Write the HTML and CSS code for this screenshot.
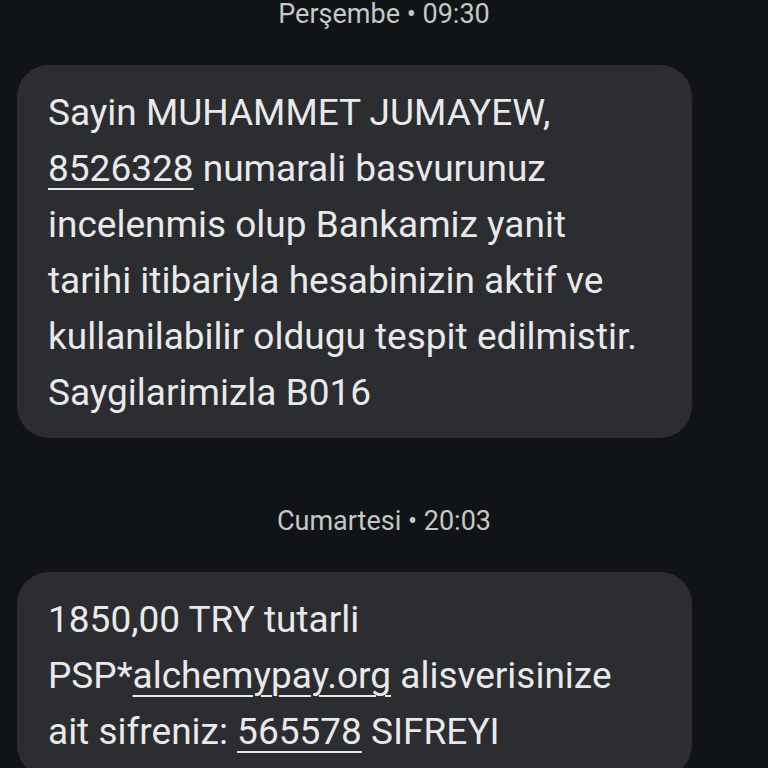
FILE: index.html
```html
<!DOCTYPE html>
<html lang="tr">
<head>
<meta charset="utf-8">
<link rel="stylesheet" href="styles.css">
</head>
<body>
<main class="thread">
  <div class="stamp">Perşembe • 09:30</div>
  <div class="bubble">
    Sayin MUHAMMET JUMAYEW,<br>
    <span class="link">8526328</span> numarali basvurunuz<br>
    incelenmis olup Bankamiz yanit<br>
    tarihi itibariyla hesabinizin aktif ve<br>
    kullanilabilir oldugu tespit edilmistir.<br>
    Saygilarimizla B016
  </div>
  <div class="stamp second">Cumartesi • 20:03</div>
  <div class="bubble">
    1850,00 TRY tutarli<br>
    PSP*<span class="link">alchemypay.org</span> alisverisinize<br>
    ait sifreniz: <span class="link">565578</span> SIFREYI
  </div>
</main>
</body>
</html>
```
FILE: styles.css
```css
html, body {
  margin: 0;
  padding: 0;
  background: #111417;
  height: 768px;
  overflow: hidden;
}
.thread {
  display: flex;
  flex-direction: column;
  padding: 0 76px 0 17px;
  font-family: Roboto, "Noto Sans", sans-serif;
}
.stamp {
  height: 28px;
  line-height: 28px;
  text-align: center;
  color: #c4c7c5;
  font-size: 27px;
  padding-left: 59px;
  margin-bottom: 37px;
}
.stamp.second {
  margin-top: 69px;
}
.bubble {
  background: #2b2d30;
  border-radius: 32px;
  padding: 20px 20px 17px 31px;
  color: #e9e9ea;
  font-size: 37px;
  line-height: 56px;
  width: 624px;
}
.link {
  text-decoration: underline;
  text-decoration-thickness: 2px;
  text-underline-offset: 7px;
}
```
